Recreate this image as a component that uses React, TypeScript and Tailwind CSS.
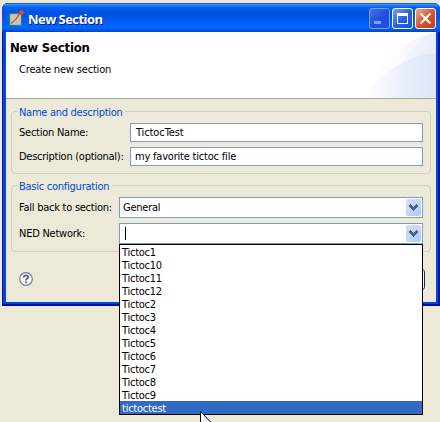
import type { ReactNode } from 'react';

const networks = ['Tictoc1', 'Tictoc10', 'Tictoc11', 'Tictoc12', 'Tictoc2', 'Tictoc3', 'Tictoc4', 'Tictoc5', 'Tictoc6', 'Tictoc7', 'Tictoc8', 'Tictoc9'];

function AppIcon() {
  return (
    <svg width="16" height="16" viewBox="0 0 16 16" className="shrink-0">
      <rect x="1.5" y="3.5" width="12" height="12" fill="#c6c8b4" stroke="#168b82" strokeWidth="1.3" />
      <path d="M3 13.5C6 11.5 8.5 9 10 6L13 3" fill="none" stroke="#f43b1c" strokeWidth="1.3" />
      <circle cx="13.5" cy="2.5" r="2.2" fill="#ff3b1e" />
    </svg>
  );
}

function CaptionButton({ kind }: { kind: 'min' | 'max' | 'close' }) {
  const look =
    kind === 'close'
      ? 'border-white bg-linear-to-br from-[#f0a58c] via-[#e0532c] to-[#c53a10]'
      : kind === 'max'
        ? 'border-white bg-linear-to-br from-[#7b9df5] via-[#2b62e8] to-[#1650dd]'
        : 'border-[#7d9ff0] bg-linear-to-br from-[#4774e6] via-[#1f50dc] to-[#1a4fe0]';
  return (
    <div className={`h-[21px] w-[21px] rounded-[3px] border ${look}`}>
      <svg width="19" height="19" viewBox="0 0 19 19" shapeRendering="crispEdges">
        {kind === 'min' && <rect x="4" y="12" width="7" height="3" fill="#8b9ff0" />}
        {kind === 'max' && <path d="M4 4h11v11H4z M5 7v7h9V7z" fill="#fff" fillRule="evenodd" />}
        {kind === 'close' && <path d="M4.5 4.5l10 10M14.5 4.5l-10 10" stroke="#fff" strokeWidth="2.2" shapeRendering="auto" />}
      </svg>
    </div>
  );
}

function Group({ title, legend, className, children }: { title: string; legend: string; className: string; children: ReactNode }) {
  return (
    <div className={`relative ml-[5px] w-[420px] rounded-[4px] border border-[#d0d0bf] ${className}`}>
      <div className={`absolute top-[-6px] left-[6px] h-[14px] bg-[#ece9d8] pl-px leading-[14px] whitespace-nowrap text-[#0046d5] ${legend}`}>{title}</div>
      {children}
    </div>
  );
}

function ComboArrow() {
  return (
    <div className="flex h-[17px] w-[15px] items-center justify-center rounded-[2px] bg-linear-to-br from-[#d5e0fd] to-[#adc8f8]">
      <svg width="9" height="7" viewBox="0 0 9 7" shapeRendering="crispEdges">
        <path d="M1 0h1v1h1v1h1v1h1V2h1V1h1V0h1v1h1v2H8v1H7v1H6v1H5v1H4V6H3V5H2V4H1V3H0V1h1z" fill="#4d6185" />
      </svg>
    </div>
  );
}

export default function App() {
  return (
    <div className="relative h-[422px] w-[440px] overflow-hidden bg-[#ece9d8] pt-[3px] pl-[2px] font-['DejaVu_Sans_Condensed','DejaVu_Sans',sans-serif] text-[11px] text-black">
      <div className="flex h-[303px] w-[438px] flex-col overflow-hidden rounded-t-[6px] bg-[#0013a0]">
        <div className="flex h-[29px] shrink-0 items-center bg-[linear-gradient(180deg,#0a49bd_0%,#3391ff_5%,#0663f0_14%,#0054e3_30%,#0054e3_48%,#0061fb_68%,#0266ff_86%,#0044c8_100%)] pr-[4px] pl-[6px]">
          <AppIcon />
          <div className="ml-[4px] grow pt-[2px] font-['Open_Sans','Noto_Sans',sans-serif] text-[13px] leading-[18px] font-bold tracking-[-0.55px] whitespace-nowrap text-white [text-shadow:1px_1px_0_#0a1883]">New Section</div>
          <div className="flex gap-[2px] pt-[2px]">
            <CaptionButton kind="min" />
            <CaptionButton kind="max" />
            <CaptionButton kind="close" />
          </div>
        </div>
        <div className="mr-[2px] ml-px h-[272px] border-x-[3px] border-b-[3px] border-[#0046e6] border-r-2 border-b-2">
          <div className="h-[270px] w-[430px] bg-[#ece9d8]">
            <div className="flex h-[67px] justify-between border-b border-[#aca899] bg-white">
              <div className="pt-[7px] pl-[4px] whitespace-nowrap">
                <div className="text-[13px] leading-[17px] font-bold tracking-[-0.2px]">New Section</div>
                <div className="mt-[6px] ml-[9px] leading-[15px] tracking-[-0.17px]">Create new section</div>
              </div>
              <svg width="74" height="66" viewBox="0 0 74 66" className="shrink-0">
                <defs>
                  <linearGradient id="sweep" x1="0" x2="1">
                    <stop offset="0" stopColor="#ffffff" />
                    <stop offset="0.5" stopColor="#f9fbff" />
                    <stop offset="1" stopColor="#edf1fb" />
                  </linearGradient>
                  <linearGradient id="fold" x1="0" x2="1">
                    <stop offset="0" stopColor="#dce4f6" stopOpacity="0" />
                    <stop offset="1" stopColor="#dce4f6" />
                  </linearGradient>
                </defs>
                <path d="M2 66C14 34 42 6 74 0V66Z" fill="url(#sweep)" />
                <path d="M23 66C35 34 50 8 74 0V66Z" fill="url(#fold)" opacity=".3" />
                <path d="M2 66C18 42 42 24 74 21V66Z" fill="url(#fold)" opacity=".85" />
              </svg>
            </div>
            <Group title="Name and description" legend="w-[107px] tracking-[-0.28px]" className="mt-[12px] h-[63px] pt-[11px] pl-[7px]">
              <div className="flex h-[19px] items-center">
                <div className="w-[111px] pt-[2px] tracking-[-0.25px] whitespace-nowrap">Section Name:</div>
                <div className="h-[19px] w-[293px] border border-[#7f9db9] bg-white pl-[5px] leading-[17px] tracking-[-0.1px]">TictocTest</div>
              </div>
              <div className="mt-[5px] flex h-[19px] items-center">
                <div className="w-[111px] pt-[2px] tracking-[-0.27px] whitespace-nowrap">Description (optional):</div>
                <div className="h-[19px] w-[293px] border border-[#7f9db9] bg-white pl-[4px] leading-[17px] tracking-[-0.2px]">my favorite tictoc file</div>
              </div>
            </Group>
            <Group title="Basic configuration" legend="w-[94px] tracking-[-0.25px]" className="mt-[11px] h-[67px] pt-[11px] pl-[7px]">
              <div className="flex h-[21px] items-center">
                <div className="w-[100px] pt-[2px] tracking-[-0.25px] whitespace-nowrap">Fall back to section:</div>
                <div className="flex h-[21px] w-[304px] items-center justify-between border border-[#7f9db9] bg-white pr-px pl-[3px]">
                  <span className="pt-[2px] tracking-[-0.25px]">General</span>
                  <ComboArrow />
                </div>
              </div>
              <div className="mt-[5px] flex h-[21px] items-center">
                <div className="w-[100px] pt-[2px] tracking-[-0.25px] whitespace-nowrap">NED Network:</div>
                <div className="flex h-[21px] w-[304px] items-center justify-between border border-[#7f9db9] bg-white pr-px pl-[5px]">
                  <span className="mb-px h-[13px] w-px bg-black" />
                  <ComboArrow />
                </div>
              </div>
            </Group>
            <div className="flex justify-between pt-[17px] pr-[11px] pl-[13px]">
              <svg width="14" height="14" viewBox="0 0 14 14" className="mt-[3px]">
                <circle cx="7" cy="7" r="6.3" fill="#fff" stroke="#6c7c98" strokeWidth="1.2" />
                <path d="M4.8 5.4C4.8 2.8 9.2 2.8 9.2 5.1C9.2 6.7 7 6.5 7 8.4M7 9.5V11.3" fill="none" stroke="#4b6288" strokeWidth="1.9" />
              </svg>
              <div className="h-[21px] w-[75px] rounded-[3px] border border-[#003c74] bg-[#f6f5ef]" />
            </div>
          </div>
        </div>
      </div>

      <div className="absolute top-[244px] left-[119px] h-[171px] w-[304px] border border-black bg-white leading-[15px] tracking-[-0.25px]">
        {networks.map((name) => (
          <div key={name} className="h-[13px] pl-[2px]">{name}</div>
        ))}
        <div className="h-[13px] bg-[#316ac5] pl-[2px] text-white">tictoctest</div>
      </div>
      <svg width="13" height="20" viewBox="0 0 13 20" className="absolute top-[411px] left-[200px]">
        <path d="M.5 .5V17L4 13.5L6.5 19L9 18L6.5 12.5H12Z" fill="#fff" stroke="#000" />
      </svg>
    </div>
  );
}
